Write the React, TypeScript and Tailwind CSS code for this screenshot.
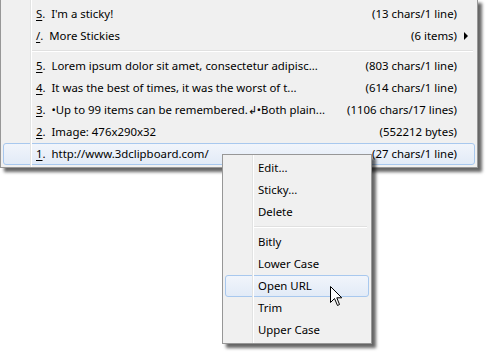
import { ReactNode } from "react";

type Item = {
  key: string;
  label: ReactNode;
  right?: string;
  sub?: boolean;
  active?: boolean;
};

const mainItems: (Item | "sep")[] = [
  { key: "S", label: "I'm a sticky!", right: "(13 chars/1 line)" },
  { key: "/", label: "More Stickies", right: "(6 items)", sub: true },
  "sep",
  { key: "5", label: "Lorem ipsum dolor sit amet, consectetur adipisc...", right: "(803 chars/1 line)" },
  { key: "4", label: "It was the best of times, it was the worst of t...", right: "(614 chars/1 line)" },
  { key: "3", label: "•Up to 99 items can be remembered.↲•Both plain...", right: "(1106 chars/17 lines)" },
  { key: "2", label: "Image: 476x290x32", right: "(552212 bytes)" },
  { key: "1", label: "http://www.3dclipboard.com/", right: "(27 chars/1 line)", active: true },
];

const contextItems: (string | "sep")[] = [
  "Edit...",
  "Sticky...",
  "Delete",
  "sep",
  "Bitly",
  "Lower Case",
  "Open URL",
  "Trim",
  "Upper Case",
];

const Separator = () => (
  <div className="h-[8px] flex items-center pl-[28px] pr-[2px]">
    <div className="w-full border-t border-[#e0e0e0] border-b border-b-white" />
  </div>
);

const Row = ({ children, active }: { children: ReactNode; active?: boolean }) => (
  <div
    className={
      active
        ? "h-[22px] flex items-center rounded-[3px] border border-[#a8c8ee] bg-gradient-to-b from-[#f1f5fb] to-[#e2ebf7]"
        : "h-[22px] flex items-center border border-transparent"
    }
  >
    {children}
  </div>
);

const Cursor = () => (
  <svg width="13" height="21" viewBox="0 0 13 21" className="absolute left-[330px] top-[286px]">
    <path
      d="M0.5 0.5 L0.5 16.5 L4.5 12.5 L7.5 19.5 L9.5 18.5 L6.8 11.8 L11.8 11.8 Z"
      fill="white"
      stroke="black"
      strokeWidth="1"
      strokeLinejoin="miter"
    />
  </svg>
);

export default function App() {
  return (
    <div className="relative w-[488px] h-[352px] bg-white overflow-hidden text-[11.4px] text-black font-['Noto_Sans',sans-serif]">
      {/* main menu */}
      <div className="relative w-[478px] -mt-px border border-[#979797] bg-[#f0f0f0] pt-[3px] pb-[2px] px-[2px] shadow-[4px_4px_3px_rgba(0,0,0,0.6)]">
        <div className="absolute left-[29px] top-0 bottom-0 w-[2px] border-l border-[#e2e3e3] border-r border-r-white" />
        {mainItems.map((it, i) =>
          it === "sep" ? (
            <Separator key={i} />
          ) : (
            <Row key={i} active={it.active}>
              <div className="relative flex w-full items-center pl-[32px] pr-[17px]">
                <span className="underline underline-offset-2">{it.key}</span>
                <span>.&nbsp;&nbsp;</span>
                <span className="flex-1 whitespace-nowrap">{it.label}</span>
                <span className="whitespace-nowrap">{it.right}</span>
                {it.sub && (
                  <span className="absolute right-[6px] top-[5px] w-0 h-0 border-y-[4px] border-y-transparent border-l-[4px] border-l-black" />
                )}
              </div>
            </Row>
          )
        )}
      </div>

      {/* context menu */}
      <div className="absolute left-[222px] top-[154px] w-[150px] border border-[#979797] bg-[#f0f0f0] pt-[2px] pb-[2px] px-[2px] shadow-[4px_4px_3px_rgba(0,0,0,0.6)]">
        <div className="absolute left-[29px] top-0 bottom-0 w-[2px] border-l border-[#e2e3e3] border-r border-r-white" />
        {contextItems.map((label, i) =>
          label === "sep" ? (
            <Separator key={i} />
          ) : (
            <Row key={i} active={label === "Open URL"}>
              <span className="pl-[32px] whitespace-nowrap">{label}</span>
            </Row>
          )
        )}
      </div>

      <Cursor />
    </div>
  );
}
